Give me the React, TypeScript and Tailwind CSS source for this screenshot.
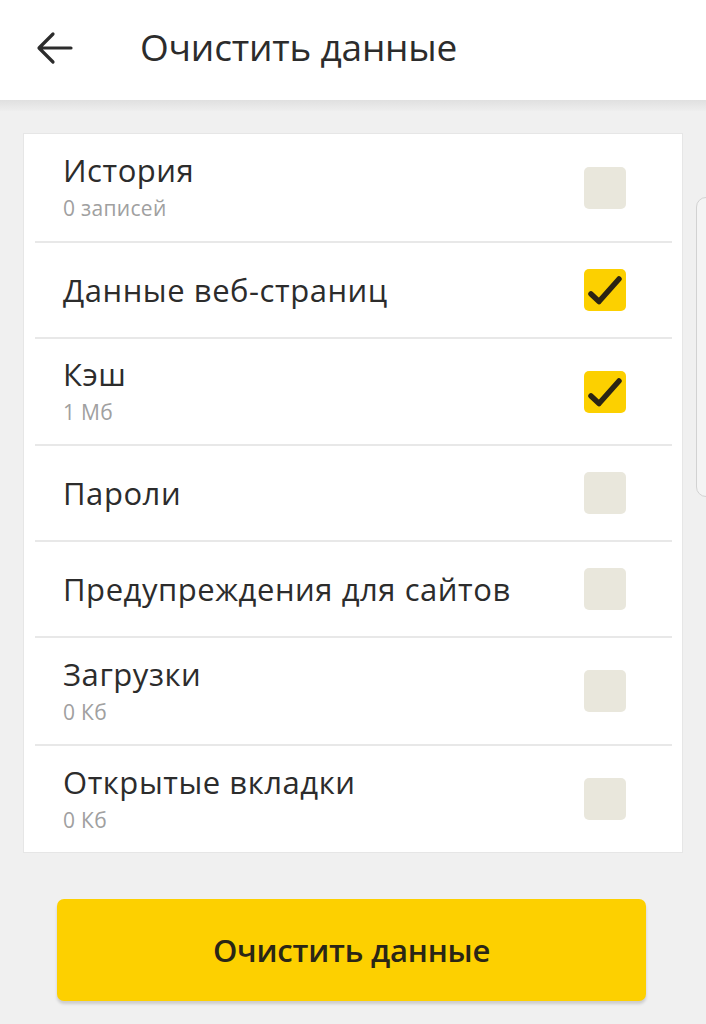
import React from "react";

type Item = { title: string; sub?: string; checked: boolean; h: number };

const items: Item[] = [
  { title: "История", sub: "0 записей", checked: false, h: 107 },
  { title: "Данные веб-страниц", checked: true, h: 96 },
  { title: "Кэш", sub: "1 Мб", checked: true, h: 107 },
  { title: "Пароли", checked: false, h: 96 },
  { title: "Предупреждения для сайтов", checked: false, h: 96 },
  { title: "Загрузки", sub: "0 Кб", checked: false, h: 108 },
  { title: "Открытые вкладки", sub: "0 Кб", checked: false, h: 108 },
];

function Check({ checked }: { checked: boolean }) {
  if (!checked)
    return <div className="w-[42px] h-[42px] rounded-[5px] bg-[#e9e7dc]" />;
  return (
    <div className="w-[42px] h-[42px] rounded-[5px] bg-[#fcd000]">
      <svg width="42" height="42" viewBox="0 0 42 42">
        <path d="M7 25 L15 32.5 L35 10" fill="none" stroke="#2b2414" strokeWidth="5.5" strokeLinecap="round" strokeLinejoin="round" />
      </svg>
    </div>
  );
}

export default function App() {
  return (
    <div
      className="relative w-[706px] h-[1024px] overflow-hidden bg-[#f0f0f0]"
      style={{ fontFamily: '"Open Sans", "Noto Sans", sans-serif' }}
    >
      <div className="h-[100px] bg-white flex items-center">
        <div className="w-[140px] flex items-center pl-[36px] pb-[4px]">
          <svg width="38" height="34" viewBox="0 0 38 34">
            <path d="M35 17 H4 M17 3 L3 17 L17 31" fill="none" stroke="#2c2c2c" strokeWidth="3.2" strokeLinecap="round" strokeLinejoin="round" />
          </svg>
        </div>
        <div className="text-[37px] text-[#2c2c2c] tracking-[-0.2px] pb-[6px]">Очистить данные</div>
      </div>
      <div className="h-[11px] bg-gradient-to-b from-[#e0e0e0] to-[#eeeeee]" />

      <div className="mx-[23px] mt-[22px] bg-white border border-[#e6e6e6]">
        {items.map((it, i) => (
          <div key={i}>
            {i > 0 && <div className="ml-[11px] mr-[10px] h-[2px] bg-[#e8e8e8]" />}
            <div
              className="flex items-center pl-[39px] pr-[56px]"
              style={{ height: i === 0 ? it.h : it.h - 2 }}
            >
              <div className={"flex-1 flex flex-col " + (it.sub ? "pb-[2px]" : "")}>
                <div className="text-[31px] leading-[34px] tracking-[0.55px] text-[#2c2c2c]">{it.title}</div>
                {it.sub && <div className="pt-[9px] text-[21px] leading-[24px] tracking-[0.3px] text-[#a0a0a0]">{it.sub}</div>}
              </div>
              <Check checked={it.checked} />
            </div>
          </div>
        ))}
      </div>

      <div className="ml-[57px] mr-[60px] mt-[46px] h-[102px] rounded-[7px] bg-[#fdd000] shadow-[0_3px_3px_rgba(0,0,0,0.15)] flex items-center justify-center">
        <span className="text-[31px] font-semibold text-[#2a2616] tracking-[-0.2px]">Очистить данные</span>
      </div>

      <div className="absolute left-[696px] top-[197px] w-[20px] h-[300px] rounded-[10px] border border-[#d2d2d2] bg-[#f4f4f4]" />
    </div>
  );
}
